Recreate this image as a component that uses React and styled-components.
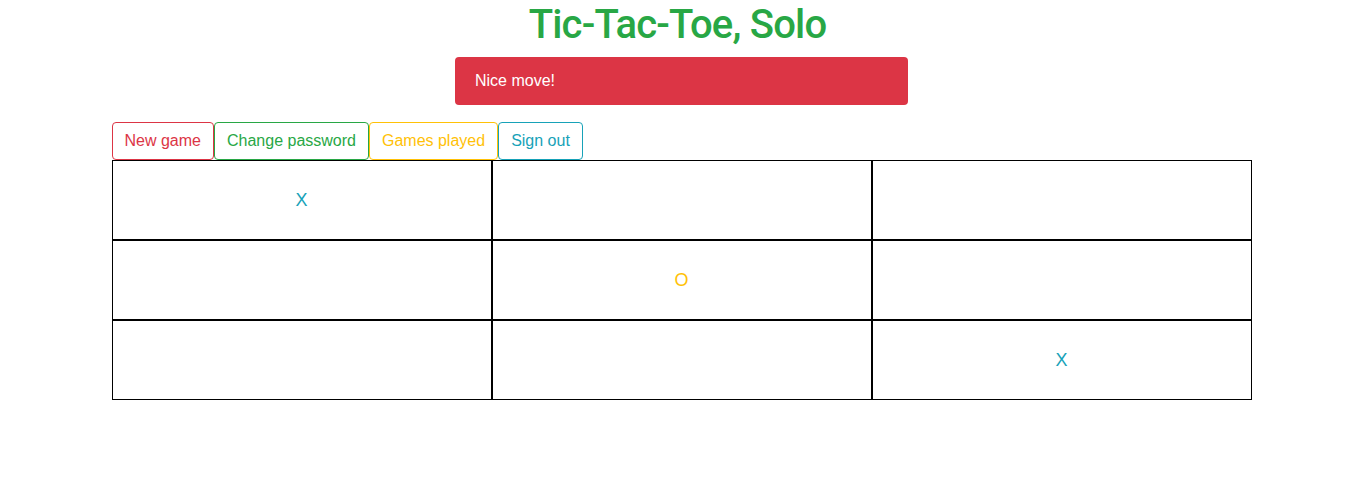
import React from 'react';
import styled, { createGlobalStyle } from 'styled-components';

const GlobalStyle = createGlobalStyle`
  body {
    margin: 0;
    background: #FFFFFF;
    color: #212529;
    font-family: "Liberation Sans", Arial, sans-serif;
    font-size: 16px;
    line-height: 1.5;
  }
`;

const colors = {
  danger: '#dc3545',
  success: '#28a745',
  warning: '#ffc107',
  info: '#17a2b8',
};

// page container
const Container = styled.div`
  width: 1140px;
  margin: 0 auto;
  padding-top: 1px;
`;

const Title = styled.h1`
  margin: 0 0 8px;
  padding-right: 8px;
  font-family: Roboto, "Liberation Sans", Arial, sans-serif;
  font-size: 40px;
  font-weight: 500;
  line-height: 48px;
  letter-spacing: -0.8px;
  text-align: center;
  color: ${colors.success};
`;

const Alert = styled.div`
  box-sizing: border-box;
  width: 453px;
  margin: 0 auto 17px;
  padding: 12px 20px;
  border-radius: 4px;
  background-color: ${colors.danger};
  color: #FFFFFF;
  font-size: 16px;
  line-height: 24px;
`;

const Toolbar = styled.div`
  display: flex;
`;

const OutlineButton = styled.button`
  box-sizing: border-box;
  height: 38px;
  padding: 6px 12px;
  border: 1px solid ${(props) => colors[props.variant]};
  border-radius: 4px;
  background: #FFFFFF;
  color: ${(props) => colors[props.variant]};
  font-family: "Liberation Sans", Arial, sans-serif;
  font-size: 16px;
  line-height: 24px;
  :hover {
    cursor: pointer;
  }
`;

const Board = styled.div`
  display: grid;
  grid-template-columns: repeat(3, 380px);
  grid-template-rows: repeat(3, 80px);
  width: 1140px;
`;

const Cell = styled.div`
  box-sizing: border-box;
  display: flex;
  align-items: center;
  justify-content: center;
  border: 1px solid #000000;
  font-size: 18px;
  color: ${(props) => (props.mark === 'X' ? colors.info : colors.warning)};
`;

const cells = ['X', '', '', '', 'O', '', '', '', 'X'];

export default function App() {
  return (
    <>
      <GlobalStyle />
      <Container>
        <Title>Tic-Tac-Toe, Solo</Title>
        <Alert>Nice move!</Alert>
        <Toolbar>
          <OutlineButton variant="danger">New game</OutlineButton>
          <OutlineButton variant="success">Change password</OutlineButton>
          <OutlineButton variant="warning">Games played</OutlineButton>
          <OutlineButton variant="info">Sign out</OutlineButton>
        </Toolbar>
        <Board>
          {cells.map((mark, i) => (
            <Cell key={i} mark={mark}>
              {mark}
            </Cell>
          ))}
        </Board>
      </Container>
    </>
  );
}
